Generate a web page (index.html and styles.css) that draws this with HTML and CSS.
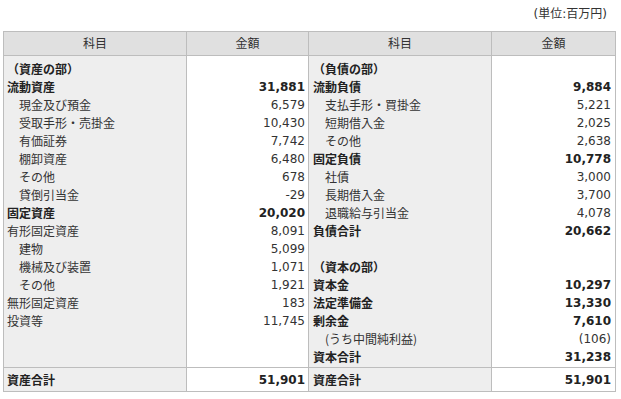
FILE: index.html
```html
<!DOCTYPE html>
<html lang="ja">
<head>
<meta charset="utf-8">
<link rel="stylesheet" href="styles.css">
</head>
<body>
<div class="unit">(単位:百万円)</div>
<table class="bs">
  <colgroup>
    <col class="c-label"><col class="c-amt"><col class="c-label"><col class="c-amt2">
  </colgroup>
  <thead>
    <tr><th>科目</th><th>金額</th><th>科目</th><th>金額</th></tr>
  </thead>
  <tbody>
    <tr class="body">
      <td class="label">
        <div class="b">（資産の部）</div>
        <div class="b">流動資産</div>
        <div class="in">現金及び預金</div>
        <div class="in">受取手形・売掛金</div>
        <div class="in">有価証券</div>
        <div class="in">棚卸資産</div>
        <div class="in">その他</div>
        <div class="in">貸倒引当金</div>
        <div class="b">固定資産</div>
        <div>有形固定資産</div>
        <div class="in">建物</div>
        <div class="in">機械及び装置</div>
        <div class="in">その他</div>
        <div>無形固定資産</div>
        <div>投資等</div>
      </td>
      <td class="amt">
        <div>&nbsp;</div>
        <div class="b">31,881</div>
        <div>6,579</div>
        <div>10,430</div>
        <div>7,742</div>
        <div>6,480</div>
        <div>678</div>
        <div>-29</div>
        <div class="b">20,020</div>
        <div>8,091</div>
        <div>5,099</div>
        <div>1,071</div>
        <div>1,921</div>
        <div>183</div>
        <div>11,745</div>
      </td>
      <td class="label r">
        <div class="b">（負債の部）</div>
        <div class="b">流動負債</div>
        <div class="in">支払手形・買掛金</div>
        <div class="in">短期借入金</div>
        <div class="in">その他</div>
        <div class="b">固定負債</div>
        <div class="in">社債</div>
        <div class="in">長期借入金</div>
        <div class="in">退職給与引当金</div>
        <div class="b">負債合計</div>
        <div>&nbsp;</div>
        <div class="b">（資本の部）</div>
        <div class="b">資本金</div>
        <div class="b">法定準備金</div>
        <div class="b">剰余金</div>
        <div class="in">(うち中間純利益)</div>
        <div class="b">資本合計</div>
      </td>
      <td class="amt r">
        <div>&nbsp;</div>
        <div class="b">9,884</div>
        <div>5,221</div>
        <div>2,025</div>
        <div>2,638</div>
        <div class="b">10,778</div>
        <div>3,000</div>
        <div>3,700</div>
        <div>4,078</div>
        <div class="b">20,662</div>
        <div>&nbsp;</div>
        <div>&nbsp;</div>
        <div class="b">10,297</div>
        <div class="b">13,330</div>
        <div class="b">7,610</div>
        <div>(106)</div>
        <div class="b">31,238</div>
      </td>
    </tr>
  </tbody>
  <tfoot>
    <tr class="total">
      <td class="label b">資産合計</td>
      <td class="amt b">51,901</td>
      <td class="label r b">資産合計</td>
      <td class="amt r b">51,901</td>
    </tr>
  </tfoot>
</table>
</body>
</html>
```

FILE: styles.css
```css
html, body {
  margin: 0;
  background: #ffffff;
}

body {
  font-family: "DejaVu Sans", "Noto Sans CJK JP", sans-serif;
  font-size: 12px;
  color: #333333;
}

.unit {
  box-sizing: border-box;
  height: 31px;
  padding: 5px 14px 0 0;
  line-height: 18px;
  text-align: right;
  font-size: 12px;
}

.bs {
  margin-left: 3px;
  width: 612px;
  border-collapse: collapse;
  table-layout: fixed;
}

.c-label { width: 183px; }
.c-amt { width: 122px; }
.c-amt2 { width: 124px; }

.bs th,
.bs td {
  border: 1px solid #bdbdbd;
}

.bs th {
  height: 23px;
  padding: 0;
  background: #e0e0e0;
  font-weight: normal;
  text-align: center;
  line-height: 18px;
}

.body td {
  vertical-align: top;
  padding: 4px 3px 1px 3px;
  line-height: 18px;
}

.label {
  background: #eeeeee;
  text-align: left;
  font-family: "Noto Sans CJK JP", sans-serif;
}

.label.r {
  padding-left: 4px;
}

.amt {
  background: #ffffff;
  text-align: right;
}

.amt.r {
  padding-right: 4px;
}

.body .label.r { padding-left: 4px; }
.body .amt.r { padding-right: 4px; }

.in {
  padding-left: 12px;
}

.b {
  font-weight: bold;
  color: #222222;
}

.total td {
  height: 23px;
  padding: 0 3px;
  line-height: 18px;
  vertical-align: middle;
}

.total td.r.label { padding-left: 4px; }
.total td.r.amt { padding-right: 4px; }
```
